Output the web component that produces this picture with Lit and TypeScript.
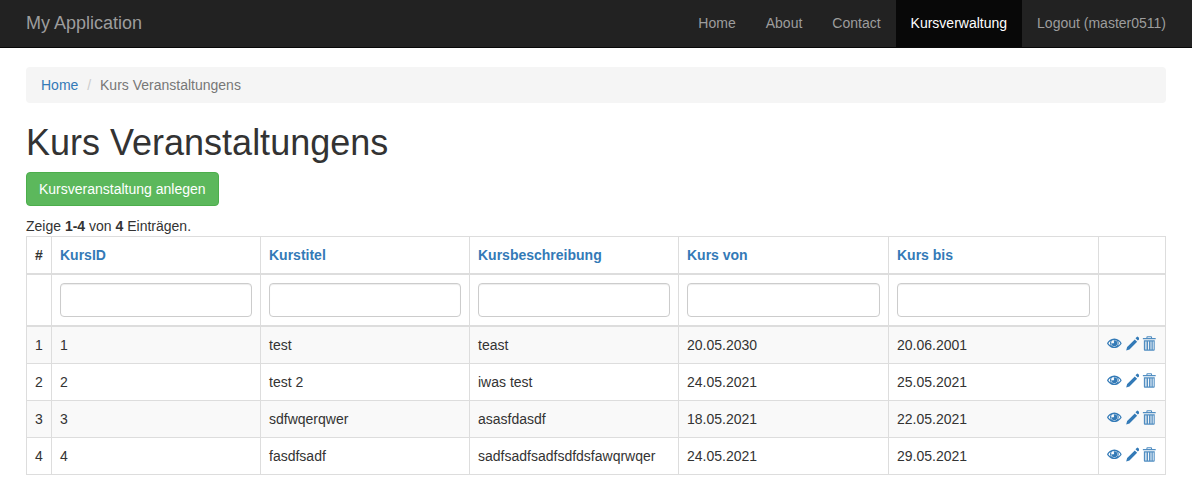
import { LitElement, html, css, svg } from "lit";
import { customElement } from "lit/decorators.js";

const eye = svg`<path d="M7.500 2.400C3.900 2.400 1.200 4.800 0 7.300c1.200 2.500 3.900 4.900 7.500 4.900S13.800 9.800 15 7.300C13.800 4.800 11.100 2.400 7.500 2.400zM1.400 7.300c.5-.9 1.300-1.700 2.300-2.300a4.300 4.300 0 0 0 0 4.600c-1-.6-1.800-1.400-2.300-2.300zm10 2.300a4.300 4.300 0 0 0 0-4.600c1 .6 1.800 1.400 2.300 2.300-.5.900-1.300 1.700-2.300 2.300zM7.500 3.900a3.400 3.400 0 1 1 0 6.800 3.400 3.400 0 0 1 0-6.800z" fill-rule="evenodd"/><path d="M7.500 4.300a3 3 0 1 1-3 3c0-.3 0-.6.100-.8.200.5.700.9 1.300.9a1.400 1.400 0 0 0 .9-2.500c.2-.4.400-.6.700-.6z"/>`;
const pencil = svg`<path d="M12 .8a1 1 0 0 1 1.400 0l1 1a1 1 0 0 1 0 1.400l-1.300 1.300-2.400-2.400zM10 3.400l2.400 2.400-7.800 7.800-3.400 1 1-3.400z"/>`;
const trash = svg`<path d="M5.500 0h3.800a1 1 0 0 1 1 1v.8h3.700v1.400H.9V1.800h3.600V1a1 1 0 0 1 1-1zm.1 1v.8h3.600V1zM1.900 4.200H13V14a1 1 0 0 1-1 1H2.900a1 1 0 0 1-1-1zm1.500 1.300v8.200h1.200V5.500zm2.800 0v8.200h1V5.500zm2.500 0v8.200h1V5.500zm2.300 0v8.200h.9V5.500z" fill-rule="evenodd" opacity=".85"/>`;

const rows = [
  ["1", "1", "test", "teast", "20.05.2030", "20.06.2001"],
  ["2", "2", "test 2", "iwas test", "24.05.2021", "25.05.2021"],
  ["3", "3", "sdfwqerqwer", "asasfdasdf", "18.05.2021", "22.05.2021"],
  ["4", "4", "fasdfsadf", "sadfsadfsadfsdfdsfawqrwqer", "24.05.2021", "29.05.2021"],
];
const heads = ["KursID", "Kurstitel", "Kursbeschreibung", "Kurs von", "Kurs bis"];
const navs = ["Home", "About", "Contact", "Kursverwaltung", "Logout (master0511)"];

@customElement("app-root")
export class AppRoot extends LitElement {
  static styles = css`
    :host { display: block; font-family: "Liberation Sans", Arial, sans-serif; font-size: 14px; line-height: 20px; color: #333; background: #fff; }
    * { box-sizing: border-box; }
    a { color: #337ab7; text-decoration: none; }
    .navbar { height: 48px; background: #222; border-bottom: 1px solid #080808; display: flex; justify-content: space-between; padding: 0 11px 0 11px; }
    .brand { font-size: 18px; color: #9d9d9d; padding: 13px 15px; line-height: 20px; }
    .nav { display: flex; }
    .nav a { color: #9d9d9d; padding: 13px 15px 14px; }
    .nav a.active { color: #fff; background: #080808; }
    .container { padding: 19px 26px 0; }
    .breadcrumb { height: 36px; background: #f5f5f5; border-radius: 4px; padding: 8px 15px; margin-bottom: 20px; color: #777; }
    .sep { color: #ccc; padding: 0 5px; }
    h1 { font-size: 36px; font-weight: 500; line-height: 40px; margin: 0 0 9px; color: #333; }
    .btn { display: inline-block; height: 34px; padding: 6px 12px; background: #5cb85c; border: 1px solid #4cae4c; border-radius: 4px; color: #fff; }
    .summary { height: 20px; margin-top: 10px; line-height: 20px; }
    .summary b { color: #333; }
    table { width: 1139px; table-layout: fixed; border-collapse: collapse; border: 1px solid #ddd; }
    th, td { border: 1px solid #ddd; padding: 8px; text-align: left; vertical-align: top; height: 37px; }
    thead th { border-bottom: 2px solid #ddd; height: 37px; }
    thead tr.filter td { border-bottom: 2px solid #ddd; height: 52px; }
    tbody tr:nth-child(odd) td { background: #f9f9f9; }
    input { display: block; width: 100%; height: 34px; border: 1px solid #ccc; border-radius: 4px; background: #fff; box-shadow: inset 0 1px 1px rgba(0,0,0,.075); padding: 6px 12px; }
    .actions { display: flex; gap: 3px; height: 20px; }
    .actions svg { display: block; width: 15px; height: 15px; fill: #337ab7; margin-top: 1px; }
    .c0 { width: 25px; } .c1 { width: 209px; } .c2, .c3 { width: 209px; } .c4 { width: 210px; } .c5 { width: 210px; } .c6 { width: 67px; }
  `;

  render() {
    return html`
      <nav class="navbar">
        <a class="brand" href="#">My Application</a>
        <div class="nav">
          ${navs.map((n) => html`<a href="#" class=${n === "Kursverwaltung" ? "active" : ""}>${n}</a>`)}
        </div>
      </nav>
      <div class="container">
        <div class="breadcrumb"><a href="#">Home</a><span class="sep"> / </span>Kurs Veranstaltungens</div>
        <h1>Kurs Veranstaltungens</h1>
        <a class="btn" href="#">Kursveranstaltung anlegen</a>
        <div class="summary">Zeige <b>1-4</b> von <b>4</b> Einträgen.</div>
        <table>
          <colgroup>
            <col class="c0" /><col class="c1" /><col class="c2" /><col class="c3" /><col class="c4" /><col class="c5" /><col class="c6" />
          </colgroup>
          <thead>
            <tr>
              <th>#</th>
              ${heads.map((h) => html`<th><a href="#">${h}</a></th>`)}
              <th></th>
            </tr>
            <tr class="filter">
              <td></td>
              ${heads.map(() => html`<td><input type="text" /></td>`)}
              <td></td>
            </tr>
          </thead>
          <tbody>
            ${rows.map(
              (r) => html`<tr>
                ${r.map((c) => html`<td>${c}</td>`)}
                <td>
                  <div class="actions">
                    <svg viewBox="0 0 15 15">${eye}</svg>
                    <svg viewBox="0 0 15 15">${pencil}</svg>
                    <svg viewBox="0 0 15 15">${trash}</svg>
                  </div>
                </td>
              </tr>`
            )}
          </tbody>
        </table>
      </div>
    `;
  }
}
